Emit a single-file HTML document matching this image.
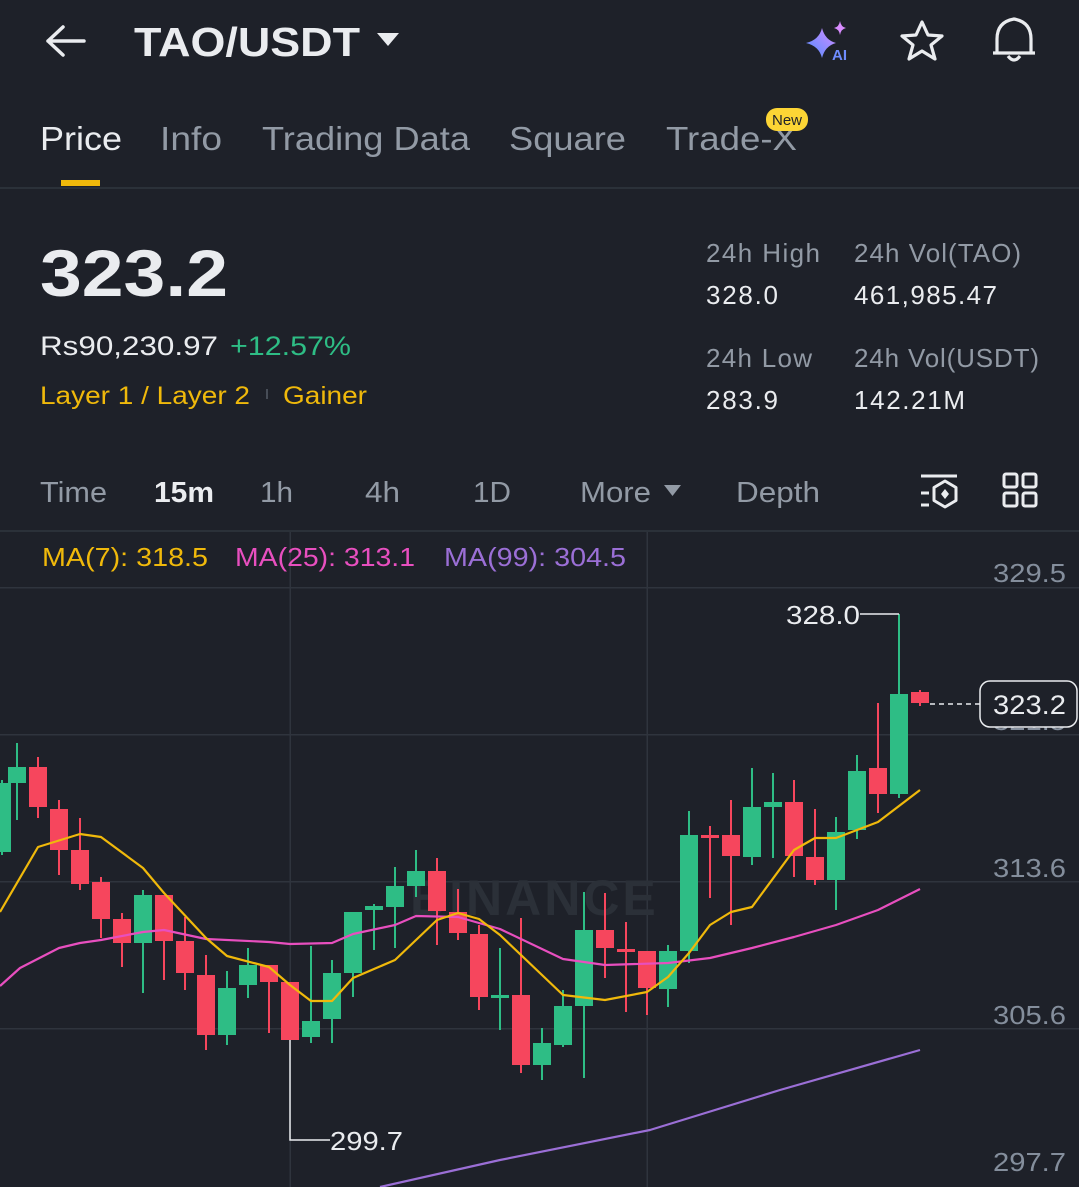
<!DOCTYPE html>
<html><head><meta charset="utf-8"><style>
html,body{margin:0;padding:0;background:#1e2129;width:1079px;height:1187px;overflow:hidden}
svg{display:block}
text{font-family:"Liberation Sans",sans-serif}
</style></head><body>
<svg width="1079" height="1187" viewBox="0 0 1079 1187" xmlns="http://www.w3.org/2000/svg">
<rect width="1079" height="1187" fill="#1e2129"/>
<defs><linearGradient id="ai" x1="0" y1="1" x2="1" y2="0"><stop offset="0" stop-color="#4f8cff"/><stop offset="1" stop-color="#d58cff"/></linearGradient></defs>
<path d="M84 41H48M48 41L63 27M48 41L63 55" stroke="#eaecef" stroke-width="3.5" fill="none" stroke-linecap="round" stroke-linejoin="round"/>
<text x="134" y="56" font-size="41" font-weight="bold" fill="#eaecef" textLength="226" lengthAdjust="spacingAndGlyphs">TAO/USDT</text>
<path d="M377 33H399L388 46Z" fill="#eaecef"/>
<path d="M822 28Q825 40 836 43Q825 46 822 58Q819 46 806 43Q819 40 822 28Z" fill="url(#ai)"/>
<path d="M840 21Q841 27 846 28Q841 29 840 35Q839 29 834 28Q839 27 840 21Z" fill="#d88cff"/>
<text x="832" y="60" font-size="15" font-weight="bold" fill="#6f8cff">AI</text>
<path d="M922 22L928 35L942 36L931 45L935 59L922 51L909 59L913 45L902 36L916 35Z" stroke="#eaecef" stroke-width="3.2" fill="none" stroke-linejoin="round"/>
<path d="M997 53V39Q997 22 1014 19Q1031 22 1031 39V53ZM993 53H1035M1008 56Q1014 64 1020 56" stroke="#eaecef" stroke-width="3.2" fill="none" stroke-linejoin="round"/>
<g font-size="33">
<text x="40" y="150" fill="#eaecef" textLength="82" lengthAdjust="spacingAndGlyphs">Price</text>
<text x="160" y="150" fill="#929aa5" textLength="62" lengthAdjust="spacingAndGlyphs">Info</text>
<text x="262" y="150" fill="#929aa5" textLength="208" lengthAdjust="spacingAndGlyphs">Trading Data</text>
<text x="509" y="150" fill="#929aa5" textLength="117" lengthAdjust="spacingAndGlyphs">Square</text>
<text x="666" y="150" fill="#929aa5" textLength="131" lengthAdjust="spacingAndGlyphs">Trade-X</text>
</g>
<rect x="61" y="180" width="39" height="6" fill="#f0b90b"/>
<rect x="766" y="108" width="42" height="23" rx="11" fill="#fcd535"/>
<text x="787" y="125" font-size="15" fill="#1e2129" text-anchor="middle">New</text>
<rect x="0" y="187" width="1079" height="2" fill="#2b3139"/>
<text x="40" y="296" font-size="66" font-weight="bold" fill="#eaecef" textLength="188" lengthAdjust="spacingAndGlyphs">323.2</text>
<text x="40" y="355" font-size="27" fill="#eaecef" textLength="178" lengthAdjust="spacingAndGlyphs">Rs90,230.97</text>
<text x="230" y="355" font-size="27" fill="#2ebd85" textLength="121" lengthAdjust="spacingAndGlyphs">+12.57%</text>
<text x="40" y="404" font-size="25" fill="#f0b90b" textLength="210" lengthAdjust="spacingAndGlyphs">Layer 1 / Layer 2</text>
<rect x="266" y="389" width="2" height="10" fill="#474d57"/>
<text x="283" y="404" font-size="25" fill="#f0b90b" textLength="84" lengthAdjust="spacingAndGlyphs">Gainer</text>
<g font-size="26" lengthAdjust="spacingAndGlyphs">
<text x="706" y="262" fill="#929aa5" textLength="114">24h High</text>
<text x="706" y="304" fill="#eaecef" textLength="72">328.0</text>
<text x="706" y="409" fill="#eaecef" textLength="72">283.9</text>
<text x="706" y="367" fill="#929aa5" textLength="106">24h Low</text>
<text x="854" y="262" fill="#929aa5" textLength="167">24h Vol(TAO)</text>
<text x="854" y="304" fill="#eaecef" textLength="143">461,985.47</text>
<text x="854" y="367" fill="#929aa5" textLength="185">24h Vol(USDT)</text>
<text x="854" y="409" fill="#eaecef" textLength="111">142.21M</text>
</g>
<g font-size="29">
<text x="40" y="502" fill="#929aa5" textLength="67" lengthAdjust="spacingAndGlyphs">Time</text>
<text x="154" y="502" fill="#eaecef" font-weight="bold" textLength="60" lengthAdjust="spacingAndGlyphs">15m</text>
<text x="260" y="502" fill="#929aa5" textLength="33" lengthAdjust="spacingAndGlyphs">1h</text>
<text x="365" y="502" fill="#929aa5" textLength="35" lengthAdjust="spacingAndGlyphs">4h</text>
<text x="473" y="502" fill="#929aa5" textLength="38" lengthAdjust="spacingAndGlyphs">1D</text>
<text x="580" y="502" fill="#929aa5" textLength="71" lengthAdjust="spacingAndGlyphs">More</text>
<text x="736" y="502" fill="#929aa5" textLength="84" lengthAdjust="spacingAndGlyphs">Depth</text>
</g>
<path d="M664 485H681L672.5 496Z" fill="#929aa5"/>
<g stroke="#eaecef" stroke-width="3" fill="none" stroke-linejoin="round">
<path d="M921 476H957M921 493H929M921 505H929"/>
<path d="M945 481L956 487.5V500.5L945 507L934 500.5V487.5Z"/>
<rect x="1004" y="474" width="13" height="13" rx="2"/><rect x="1023" y="474" width="13" height="13" rx="2"/>
<rect x="1004" y="493" width="13" height="13" rx="2"/><rect x="1023" y="493" width="13" height="13" rx="2"/>
</g>
<path d="M945 489L949 494L945 499L941 494Z" fill="#eaecef"/>
<rect x="0" y="530" width="1079" height="2" fill="#2b3139"/>
<g fill="#2f343d">
<rect x="0" y="587" width="1079" height="1.5"/><rect x="0" y="734" width="1079" height="1.5"/>
<rect x="0" y="881" width="1079" height="1.5"/><rect x="0" y="1028" width="1079" height="1.5"/>
<rect x="289.5" y="532" width="1.5" height="655"/><rect x="646.5" y="532" width="1.5" height="655"/>
</g>
<g font-size="26">
<text x="42" y="566" fill="#f0b90b" textLength="166" lengthAdjust="spacingAndGlyphs">MA(7): 318.5</text>
<text x="235" y="566" fill="#e84fbf" textLength="180" lengthAdjust="spacingAndGlyphs">MA(25): 313.1</text>
<text x="444" y="566" fill="#9b6fd6" textLength="182" lengthAdjust="spacingAndGlyphs">MA(99): 304.5</text>
<g fill="#848e9c">
<text x="993" y="582" textLength="73" lengthAdjust="spacingAndGlyphs">329.5</text><text x="993" y="730" textLength="73" lengthAdjust="spacingAndGlyphs">321.5</text>
<text x="993" y="877" textLength="73" lengthAdjust="spacingAndGlyphs">313.6</text><text x="993" y="1024" textLength="73" lengthAdjust="spacingAndGlyphs">305.6</text><text x="993" y="1171" textLength="73" lengthAdjust="spacingAndGlyphs">297.7</text>
</g>
</g>
<text x="410" y="915" font-size="50" font-weight="bold" fill="#2b3038" letter-spacing="3">BINANCE</text>
<g fill="#2ebd85">
<rect x="1" y="780" width="2" height="75"/><rect x="-7" y="783" width="18" height="69"/>
<rect x="16" y="743" width="2" height="77"/><rect x="8" y="767" width="18" height="16"/>
<rect x="142" y="890" width="2" height="103"/><rect x="134" y="895" width="18" height="48"/>
<rect x="226" y="971" width="2" height="74"/><rect x="218" y="988" width="18" height="47"/>
<rect x="247" y="948" width="2" height="50"/><rect x="239" y="965" width="18" height="20"/>
<rect x="310" y="946" width="2" height="97"/><rect x="302" y="1021" width="18" height="16"/>
<rect x="331" y="960" width="2" height="83"/><rect x="323" y="973" width="18" height="46"/>
<rect x="352" y="912" width="2" height="85"/><rect x="344" y="912" width="18" height="61"/>
<rect x="373" y="904" width="2" height="46"/><rect x="365" y="906" width="18" height="4"/>
<rect x="394" y="867" width="2" height="81"/><rect x="386" y="886" width="18" height="21"/>
<rect x="415" y="850" width="2" height="47"/><rect x="407" y="871" width="18" height="15"/>
<rect x="499" y="948" width="2" height="82"/><rect x="491" y="995" width="18" height="3"/>
<rect x="541" y="1028" width="2" height="52"/><rect x="533" y="1043" width="18" height="22"/>
<rect x="562" y="990" width="2" height="57"/><rect x="554" y="1006" width="18" height="39"/>
<rect x="583" y="892" width="2" height="186"/><rect x="575" y="930" width="18" height="76"/>
<rect x="667" y="945" width="2" height="62"/><rect x="659" y="951" width="18" height="38"/>
<rect x="688" y="811" width="2" height="152"/><rect x="680" y="835" width="18" height="116"/>
<rect x="751" y="768" width="2" height="97"/><rect x="743" y="807" width="18" height="50"/>
<rect x="772" y="773" width="2" height="85"/><rect x="764" y="802" width="18" height="5"/>
<rect x="835" y="817" width="2" height="93"/><rect x="827" y="832" width="18" height="48"/>
<rect x="856" y="755" width="2" height="84"/><rect x="848" y="771" width="18" height="59"/>
<rect x="898" y="614" width="2" height="184"/><rect x="890" y="694" width="18" height="100"/>
</g>
<g fill="#f6465d">
<rect x="37" y="757" width="2" height="61"/><rect x="29" y="767" width="18" height="40"/>
<rect x="58" y="800" width="2" height="75"/><rect x="50" y="809" width="18" height="41"/>
<rect x="79" y="818" width="2" height="72"/><rect x="71" y="850" width="18" height="34"/>
<rect x="100" y="877" width="2" height="61"/><rect x="92" y="882" width="18" height="37"/>
<rect x="121" y="913" width="2" height="54"/><rect x="113" y="919" width="18" height="24"/>
<rect x="163" y="895" width="2" height="85"/><rect x="155" y="895" width="18" height="46"/>
<rect x="184" y="917" width="2" height="73"/><rect x="176" y="941" width="18" height="32"/>
<rect x="205" y="955" width="2" height="95"/><rect x="197" y="975" width="18" height="60"/>
<rect x="268" y="965" width="2" height="68"/><rect x="260" y="965" width="18" height="17"/>
<rect x="281" y="982" width="18" height="58"/>
<rect x="436" y="858" width="2" height="87"/><rect x="428" y="871" width="18" height="40"/>
<rect x="457" y="889" width="2" height="51"/><rect x="449" y="912" width="18" height="21"/>
<rect x="478" y="925" width="2" height="85"/><rect x="470" y="934" width="18" height="63"/>
<rect x="520" y="918" width="2" height="155"/><rect x="512" y="995" width="18" height="70"/>
<rect x="604" y="893" width="2" height="85"/><rect x="596" y="930" width="18" height="18"/>
<rect x="625" y="922" width="2" height="90"/><rect x="617" y="949" width="18" height="3"/>
<rect x="646" y="951" width="2" height="64"/><rect x="638" y="951" width="18" height="37"/>
<rect x="709" y="826" width="2" height="72"/><rect x="701" y="835" width="18" height="3"/>
<rect x="730" y="800" width="2" height="125"/><rect x="722" y="835" width="18" height="21"/>
<rect x="793" y="780" width="2" height="97"/><rect x="785" y="802" width="18" height="54"/>
<rect x="814" y="809" width="2" height="76"/><rect x="806" y="857" width="18" height="23"/>
<rect x="877" y="703" width="2" height="110"/><rect x="869" y="768" width="18" height="26"/>
<rect x="919" y="690" width="2" height="16"/><rect x="911" y="692" width="18" height="11"/>
</g>
<g stroke-width="2.2" fill="none" stroke-linejoin="round">
<polyline stroke="#9b6fd6" points="380,1187 500,1160 650,1130 780,1090 920,1050"/>
<polyline stroke="#e84fbf" points="0,986 20,968 59,948 80,943 101,940 143,932 164,930 206,939 269,942 290,944 332,943 353,934 395,925 416,916 458,917 479,923 500,929 563,959 605,965 668,963 710,958 752,948 794,937 836,925 878,910 920,889"/>
<polyline stroke="#f0b90b" points="0,912 38,847 80,834 101,837 143,868 164,893 206,938 227,956 269,967 290,985 311,1001 332,1001 353,978 395,960 416,940 437,920 458,913 479,919 500,935 563,995 605,1000 647,992 668,977 689,953 710,925 731,912 752,907 794,850 815,838 836,838 878,822 899,806 920,790"/>
</g>
<path d="M290 1040V1140H330M899 614H860" stroke="#eaecef" stroke-width="1.5" fill="none"/>
<text x="330" y="1150" font-size="26" fill="#eaecef" textLength="73" lengthAdjust="spacingAndGlyphs">299.7</text>
<text x="786" y="624" font-size="26" fill="#eaecef" textLength="74" lengthAdjust="spacingAndGlyphs">328.0</text>
<path d="M930 704H980" stroke="#eaecef" stroke-width="1.5" stroke-dasharray="5 4"/>
<rect x="980" y="681" width="97" height="46" rx="10" fill="#1e2129" stroke="#eaecef" stroke-width="1.5"/>
<text x="993" y="714" font-size="27" fill="#eaecef" textLength="73" lengthAdjust="spacingAndGlyphs">323.2</text>
</svg>
</body></html>
